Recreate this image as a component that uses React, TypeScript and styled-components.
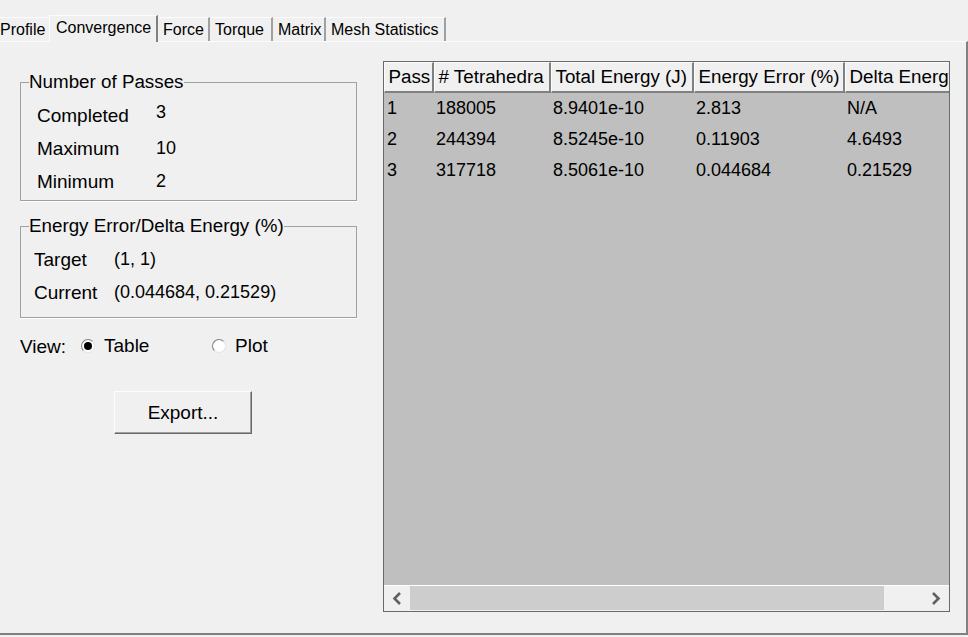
import { createGlobalStyle, styled } from "styled-components";

const GlobalStyle = createGlobalStyle`
  html, body {
    margin: 0;
    padding: 0;
    background: #f0f0f0;
    color: #000;
    font-family: "Liberation Sans", Arial, sans-serif;
    font-size: 19px;
    overflow: hidden;
  }
`;

const tabs = [
  { label: "Profile", width: 49 },
  { label: "Convergence", width: 109 },
  { label: "Force", width: 52 },
  { label: "Torque", width: 63 },
  { label: "Matrix", width: 53 },
  { label: "Mesh Statistics", width: 120 },
];

const columns = [
  { title: "Pass", width: 50 },
  { title: "# Tetrahedra", width: 117 },
  { title: "Total Energy (J)", width: 143 },
  { title: "Energy Error (%)", width: 151 },
  { title: "Delta Energy (%)", width: 104 },
];

const rows = [
  ["1", "188005", "8.9401e-10", "2.813", "N/A"],
  ["2", "244394", "8.5245e-10", "0.11903", "4.6493"],
  ["3", "317718", "8.5061e-10", "0.044684", "0.21529"],
];

const Window = styled.div`
  width: 968px;
  height: 637px;
  display: flex;
  flex-direction: column;
  box-sizing: border-box;
  padding-top: 15px;
  overflow: hidden;
`;

const TabBar = styled.div`
  height: 26px;
  display: flex;
  align-items: flex-end;
  flex: none;
  position: relative;
  z-index: 1;
`;

const Tab = styled.div<{ $active?: boolean; $width: number }>`
  box-sizing: border-box;
  width: ${(p) => p.$width}px;
  height: ${(p) => (p.$active ? "27px" : "24px")};
  margin-bottom: ${(p) => (p.$active ? "-1px" : "0")};
  padding: ${(p) => (p.$active ? "3px 0 0 6px" : "3px 0 0 5px")};
  font-size: 16px;
  line-height: 18px;
  background: #f0f0f0;
  border-top: 1px solid #fcfcfc;
  border-left: ${(p) => (p.$active ? "1px solid #fcfcfc" : "none")};
  border-right: ${(p) => (p.$active ? "2px solid #808080" : "2px solid #a0a0a0")};
  white-space: nowrap;

  &:first-child {
    padding-left: 0;
    border-right: none;
  }
`;

const Pane = styled.div`
  flex: none;
  box-sizing: border-box;
  width: 968px;
  height: 594px;
  border-top: 1px solid #fcfcfc;
  border-right: 2px solid #808080;
  border-bottom: 2px solid #808080;
  display: flex;
  padding: 19px 16px 20px 20px;
`;

const LeftColumn = styled.div`
  width: 337px;
  flex: none;
  display: flex;
  flex-direction: column;
  padding-top: 12px;
`;

const GroupBox = styled.fieldset<{ $height: number; $gap: number }>`
  box-sizing: border-box;
  height: ${(p) => p.$height}px;
  margin: 0 0 ${(p) => p.$gap}px;
  padding: 0;
  border: 1px solid #a0a0a0;
  box-shadow: 0 1px 0 #fff;
  min-width: 0;
`;

const GroupTitle = styled.legend`
  margin-left: 8px;
  padding: 0;
  line-height: 18px;
  font-size: 18.8px;
`;

const InfoList = styled.div<{ $labelWidth: number; $left: number; $top: number }>`
  display: grid;
  grid-template-columns: ${(p) => p.$labelWidth}px 1fr;
  grid-auto-rows: 33px;
  padding: ${(p) => p.$top}px 0 0 ${(p) => p.$left}px;
  align-items: center;
`;

const InfoValue = styled.span<{ $raised?: boolean }>`
  position: relative;
  top: ${(p) => (p.$raised ? "-3px" : "0")};
  font-size: 18px;
`;

const ViewRow = styled.div`
  display: flex;
  align-items: center;
  height: 20px;
`;

const ViewLabel = styled.span`
  width: 61px;
  position: relative;
  top: 1px;
`;

const RadioOption = styled.label<{ $width: number }>`
  display: flex;
  align-items: center;
  gap: 9px;
  width: ${(p) => p.$width}px;
`;

const RadioMark = styled.span<{ $checked?: boolean }>`
  box-sizing: border-box;
  width: 14px;
  height: 14px;
  border-radius: 50%;
  border: 1px solid #808080;
  border-right-color: #e4e4e4;
  border-bottom-color: #e4e4e4;
  background: #fff;
  display: flex;
  align-items: center;
  justify-content: center;

  &::after {
    content: "";
    display: ${(p) => (p.$checked ? "block" : "none")};
    width: 8px;
    height: 8px;
    border-radius: 50%;
    background: #000;
  }
`;

const ExportButton = styled.button`
  box-sizing: border-box;
  align-self: flex-start;
  width: 138px;
  height: 43px;
  margin: 35px 0 0 94px;
  padding: 0;
  background: #f0f0f0;
  color: #000;
  font: inherit;
  border: 1px solid;
  border-color: #fcfcfc #696969 #696969 #fcfcfc;
  box-shadow: inset -1px -1px 0 #a0a0a0;
`;

const TableFrame = styled.div`
  margin-left: 26px;
  box-sizing: border-box;
  width: 567px;
  height: 551px;
  border: 1px solid #696969;
  display: flex;
  flex-direction: column;
  background: #bfbfbf;
`;

const TableScroll = styled.div`
  flex: 1;
  overflow: hidden;
`;

const DataTable = styled.table`
  table-layout: fixed;
  width: 565px;
  border-collapse: separate;
  border-spacing: 0;
`;

const HeaderCell = styled.th`
  box-sizing: border-box;
  height: 31px;
  padding: 0 0 0 3.5px;
  background: #f0f0f0;
  font-size: 18.8px;
  font-weight: normal;
  text-align: left;
  white-space: nowrap;
  overflow: hidden;
  border-top: 1px solid #fcfcfc;
  border-left: 1px solid #fcfcfc;
  border-right: 2px solid #808080;
  border-bottom: 2px solid #808080;

  &:last-child {
    border-right: none;
  }
`;

const BodyCell = styled.td`
  box-sizing: border-box;
  height: 31px;
  padding: 0 0 0 2px;
  font-size: 18px;
  white-space: nowrap;
  overflow: hidden;

  &:first-child {
    padding-left: 3px;
  }
`;

const ScrollBar = styled.div`
  flex: none;
  height: 26px;
  display: flex;
  align-items: stretch;
  background: #f0f0f0;
  border-top: 1px solid #fff;
  box-sizing: border-box;
  padding-bottom: 1px;
`;

const ScrollArrow = styled.div`
  width: 26px;
  flex: none;
  display: flex;
  align-items: center;
  justify-content: center;
  color: #606060;
`;

const ScrollTrack = styled.div`
  flex: 1;
  display: flex;
`;

const ScrollThumb = styled.div`
  width: 474px;
  background: #cdcdcd;
`;

const Chevron = ({ dir }: { dir: "left" | "right" }) => (
  <svg width="10" height="13" viewBox="0 0 10 13">
    <path
      d={dir === "left" ? "M8 1 L2.5 6.5 L8 12" : "M2 1 L7.5 6.5 L2 12"}
      fill="none"
      stroke="currentColor"
      strokeWidth="2.6"
    />
  </svg>
);

export default function App() {
  return (
    <Window>
      <GlobalStyle />
      <TabBar>
        {tabs.map((tab) => (
          <Tab key={tab.label} $width={tab.width} $active={tab.label === "Convergence"}>
            {tab.label}
          </Tab>
        ))}
      </TabBar>
      <Pane>
        <LeftColumn>
          <GroupBox $height={128} $gap={16}>
            <GroupTitle>Number of Passes</GroupTitle>
            <InfoList $labelWidth={119} $left={16} $top={8}>
              <span>Completed</span>
              <InfoValue $raised>3</InfoValue>
              <span>Maximum</span>
              <InfoValue>10</InfoValue>
              <span>Minimum</span>
              <InfoValue>2</InfoValue>
            </InfoList>
          </GroupBox>
          <GroupBox $height={101} $gap={18}>
            <GroupTitle>Energy Error/Delta Energy (%)</GroupTitle>
            <InfoList $labelWidth={80} $left={13} $top={8}>
              <span>Target</span>
              <InfoValue>(1, 1)</InfoValue>
              <span>Current</span>
              <InfoValue>(0.044684, 0.21529)</InfoValue>
            </InfoList>
          </GroupBox>
          <ViewRow>
            <ViewLabel>View:</ViewLabel>
            <RadioOption $width={131}>
              <RadioMark $checked />
              Table
            </RadioOption>
            <RadioOption $width={80}>
              <RadioMark />
              Plot
            </RadioOption>
          </ViewRow>
          <ExportButton>Export...</ExportButton>
        </LeftColumn>
        <TableFrame>
          <TableScroll>
            <DataTable>
              <colgroup>
                {columns.map((col) => (
                  <col key={col.title} width={col.width} />
                ))}
              </colgroup>
              <thead>
                <tr>
                  {columns.map((col) => (
                    <HeaderCell key={col.title}>{col.title}</HeaderCell>
                  ))}
                </tr>
              </thead>
              <tbody>
                {rows.map((row) => (
                  <tr key={row[0]}>
                    {row.map((cell, i) => (
                      <BodyCell key={i}>{cell}</BodyCell>
                    ))}
                  </tr>
                ))}
              </tbody>
            </DataTable>
          </TableScroll>
          <ScrollBar>
            <ScrollArrow>
              <Chevron dir="left" />
            </ScrollArrow>
            <ScrollTrack>
              <ScrollThumb />
            </ScrollTrack>
            <ScrollArrow>
              <Chevron dir="right" />
            </ScrollArrow>
          </ScrollBar>
        </TableFrame>
      </Pane>
    </Window>
  );
}
